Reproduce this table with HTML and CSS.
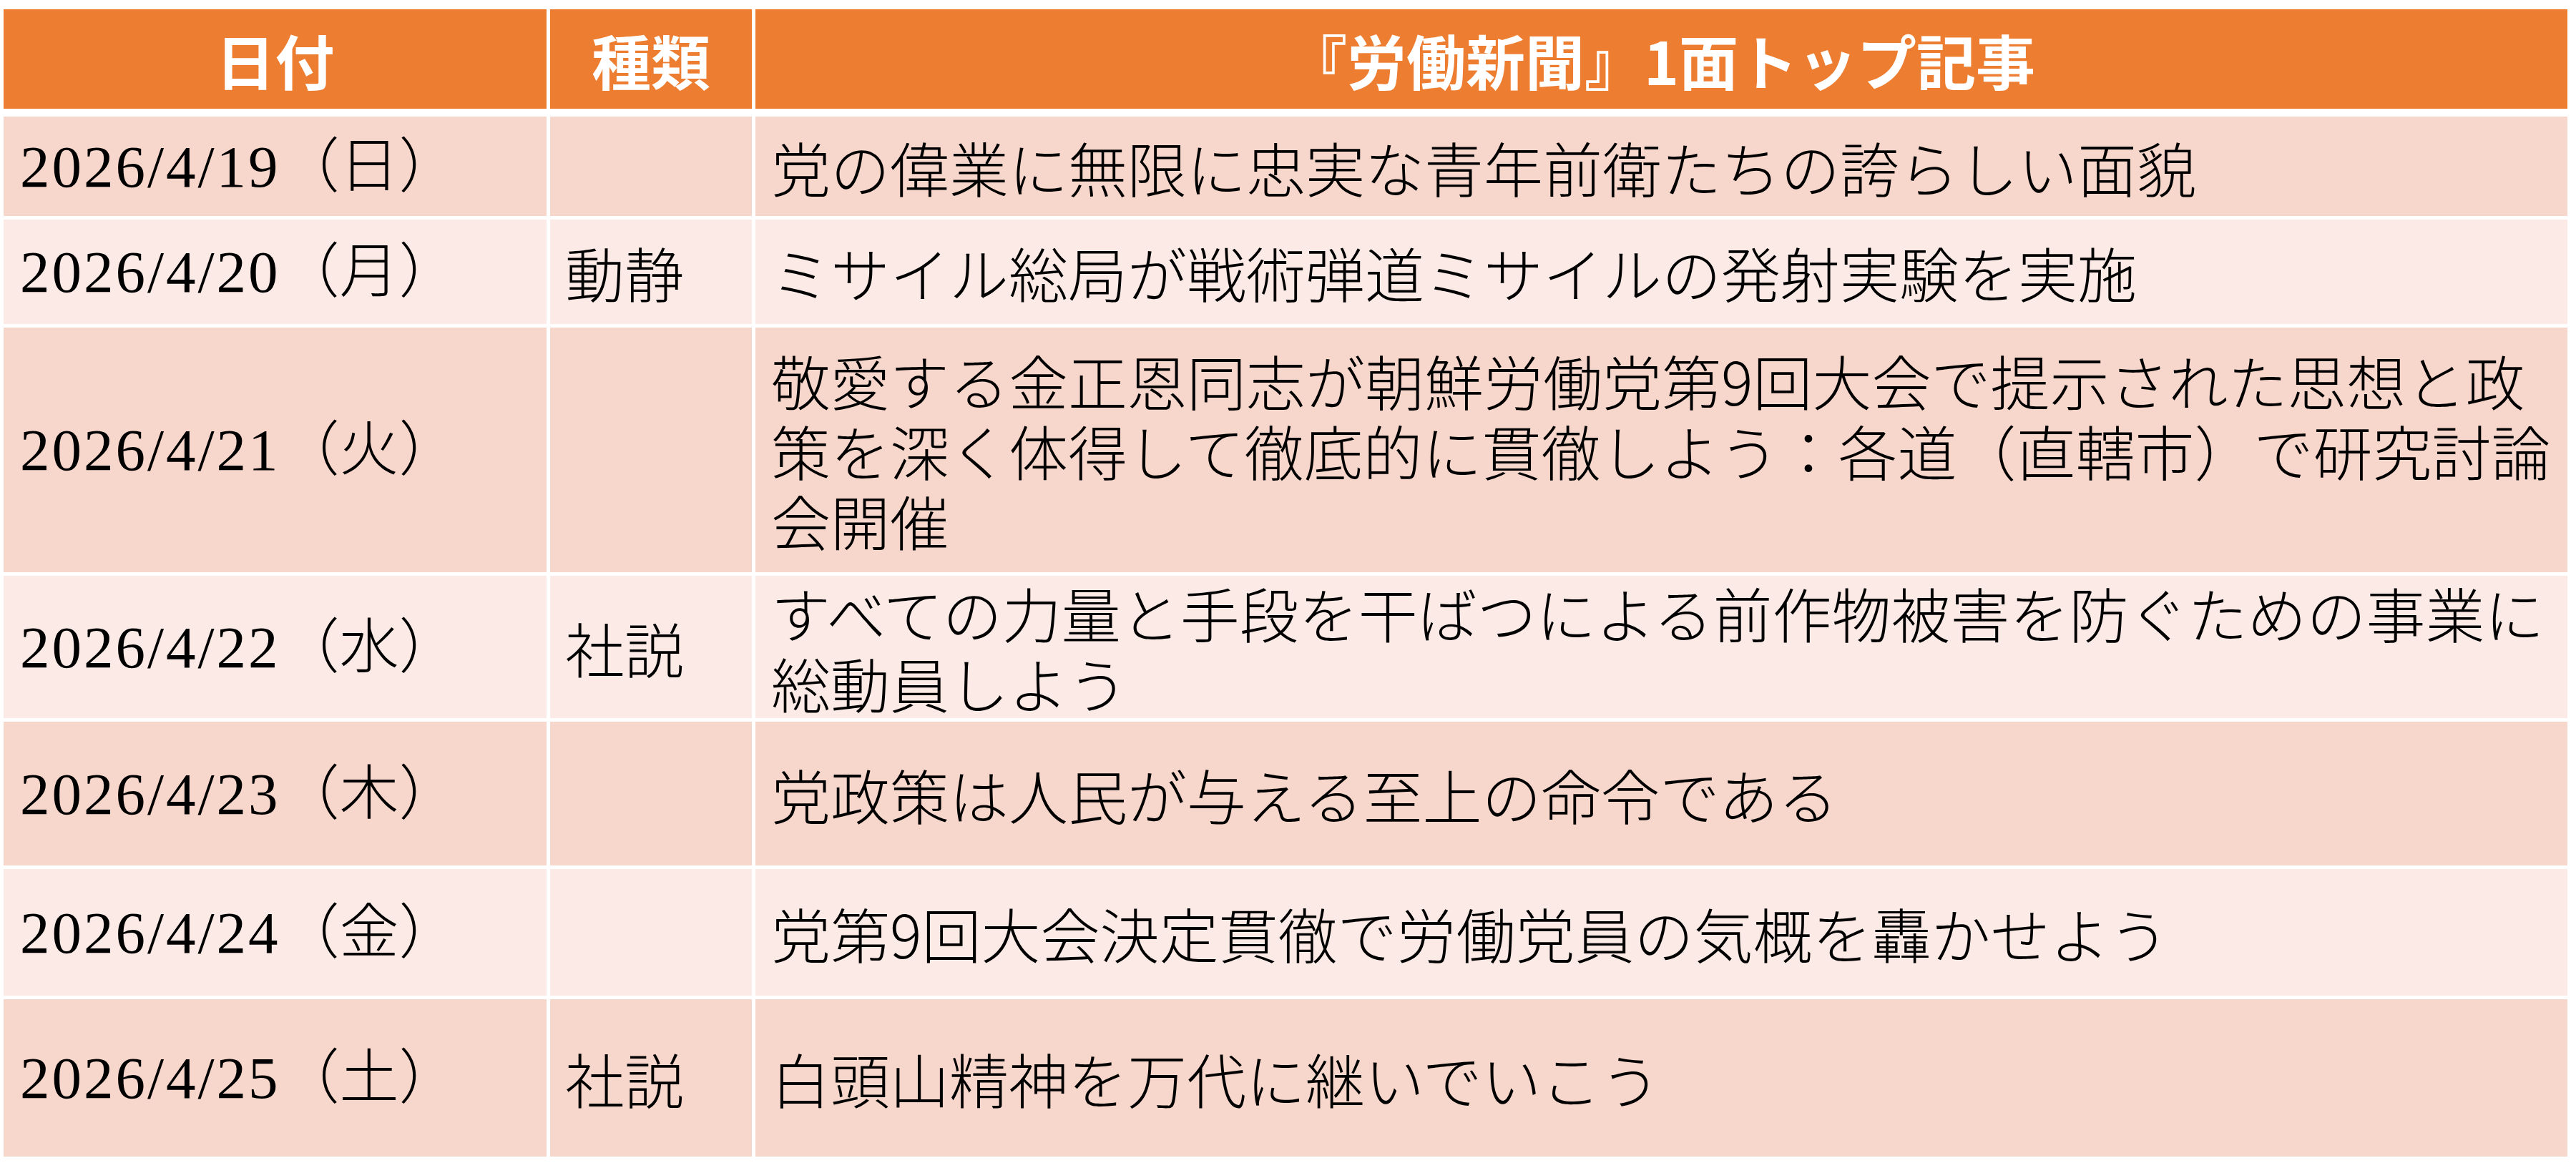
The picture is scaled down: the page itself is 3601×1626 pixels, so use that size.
FILE: index.html
```html
<!DOCTYPE html>
<html lang="ja">
<head>
<meta charset="utf-8">
<title>『労働新聞』1面トップ記事</title>
<link rel="stylesheet" href="styles.css">
</head>
<body>
<div class="table">
  <div class="head">
    <div class="hcell">日付</div>
    <div class="hcell">種類</div>
    <div class="hcell">『労働新聞』1面トップ記事</div>
  </div>
  <div class="body">
    <div class="row odd r1">
      <div class="cell date"><span class="num">2026/4/19</span>（日）</div>
      <div class="cell kind"></div>
      <div class="cell title">党の偉業に無限に忠実な青年前衛たちの誇らしい面貌</div>
    </div>
    <div class="row even r2">
      <div class="cell date"><span class="num">2026/4/20</span>（月）</div>
      <div class="cell kind">動静</div>
      <div class="cell title">ミサイル総局が戦術弾道ミサイルの発射実験を実施</div>
    </div>
    <div class="row odd r3">
      <div class="cell date"><span class="num">2026/4/21</span>（火）</div>
      <div class="cell kind"></div>
      <div class="cell title"><span class="ln">敬愛する金正恩同志が朝鮮労働党第9回大会で提示された思想と政</span><span class="ln">策を深く体得して徹底的に貫徹しよう：各道（直轄市）で研究討論</span><span class="ln">会開催</span></div>
    </div>
    <div class="row even r4">
      <div class="cell date"><span class="num">2026/4/22</span>（水）</div>
      <div class="cell kind">社説</div>
      <div class="cell title"><span class="ln">すべての力量と手段を干ばつによる前作物被害を防ぐための事業に</span><span class="ln">総動員しよう</span></div>
    </div>
    <div class="row odd r5">
      <div class="cell date"><span class="num">2026/4/23</span>（木）</div>
      <div class="cell kind"></div>
      <div class="cell title">党政策は人民が与える至上の命令である</div>
    </div>
    <div class="row even r6">
      <div class="cell date"><span class="num">2026/4/24</span>（金）</div>
      <div class="cell kind"></div>
      <div class="cell title">党第9回大会決定貫徹で労働党員の気概を轟かせよう</div>
    </div>
    <div class="row odd r7">
      <div class="cell date"><span class="num">2026/4/25</span>（土）</div>
      <div class="cell kind">社説</div>
      <div class="cell title">白頭山精神を万代に継いでいこう</div>
    </div>
  </div>
</div>
</body>
</html>
```

FILE: styles.css
```css
html, body {
  margin: 0;
  padding: 0;
  background: #ffffff;
}

body {
  font-family: "Noto Sans CJK JP", "Noto Sans", sans-serif;
  color: #000000;
}

.table {
  width: 3584px;
  padding: 13px 0 0 5px;
}

.head,
.row {
  display: grid;
  grid-template-columns: 759px 282px 2533px;
  column-gap: 5px;
}

.head {
  height: 139px;
  margin-bottom: 11px;
}

.hcell {
  background: #ed7d31;
  color: #ffffff;
  font-weight: 700;
  font-size: 83px;
  display: flex;
  align-items: center;
  justify-content: center;
  white-space: nowrap;
}

.body {
  display: flex;
  flex-direction: column;
  gap: 5px;
}

.odd .cell { background: #f7d6cc; }
.even .cell { background: #fbeae5; }

.r1 { height: 139px; }
.r2 { height: 146px; }
.r3 { height: 342px; }
.r4 { height: 199px; }
.r5 { height: 201px; }
.r6 { height: 177px; }
.r7 { height: 220px; }

.cell {
  display: flex;
  align-items: center;
  padding: 0 21px;
  font-size: 83px;
  line-height: 98px;
  white-space: nowrap;
  box-sizing: border-box;
}

.date {
  font-family: "Liberation Serif", "Noto Sans CJK JP", serif;
  font-weight: 300;
  padding-left: 23px;
}

.date .num {
  letter-spacing: 3px;
}

.kind,
.title {
  font-weight: 300;
}

.title {
  padding-left: 22px;
  flex-direction: column;
  justify-content: center;
  align-items: flex-start;
}

.title .ln {
  display: block;
  height: 98px;
  line-height: 98px;
}
```
